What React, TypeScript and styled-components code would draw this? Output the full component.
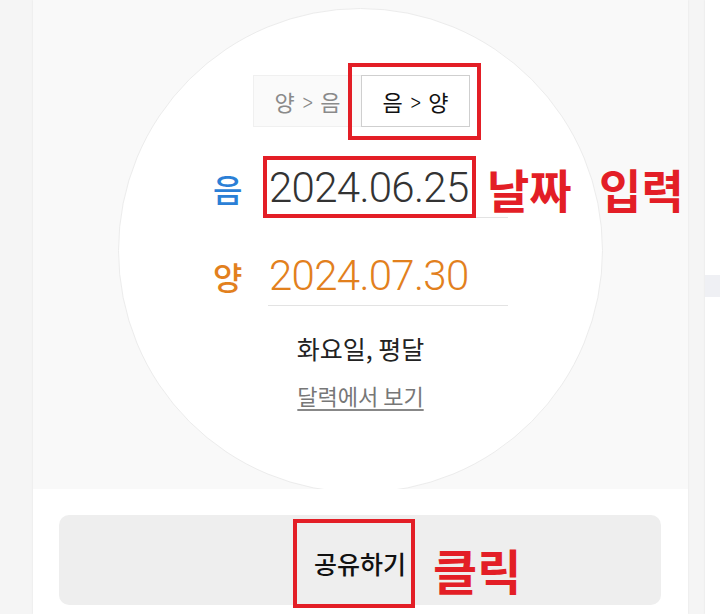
import React from "react";
import styled, { createGlobalStyle } from "styled-components";

const GlobalStyle = createGlobalStyle`
  html, body {
    margin: 0;
    padding: 0;
    background: #f5f5f5;
    font-family: "Noto Sans CJK KR", "Noto Sans", sans-serif;
  }
`;

const Page = styled.div`
  width: 720px;
  height: 614px;
  display: flex;
  overflow: hidden;
  padding-left: 33px;
  box-sizing: border-box;
  gap: 17px;
`;

const Card = styled.div`
  width: 655px;
  flex-shrink: 0;
  display: flex;
  flex-direction: column;
  background: #fff;
  box-shadow: 0 0 2px rgba(0, 0, 0, 0.08);
`;

const SidePanel = styled.div`
  flex: 1;
  background: #fff;
  box-shadow: 0 0 2px rgba(0, 0, 0, 0.08);
  padding-top: 275px;
`;

const SideBand = styled.div`
  height: 22px;
  background: #eff0f4;
`;

const Converter = styled.div`
  height: 489px;
  background: #f9f9f9;
  display: flex;
  justify-content: center;
  overflow: hidden;
`;

const Circle = styled.div`
  width: 485px;
  height: 485px;
  flex-shrink: 0;
  margin-top: 8px;
  border-radius: 50%;
  background: #fff;
  border: 1px solid #ececec;
  box-sizing: border-box;
  display: flex;
  flex-direction: column;
  align-items: center;
  padding-top: 66px;
`;

const Toggle = styled.div`
  display: flex;
  height: 52px;
  background: #fafafa;
  border: 1px solid #f0f0f0;
  box-sizing: border-box;
  margin-left: 2px;
`;

const ToggleButton = styled.div<{ $active?: boolean }>`
  position: relative;
  width: 107px;
  display: flex;
  align-items: center;
  justify-content: center;
  gap: 6px;
  font-size: 22px;
  color: ${(p) => (p.$active ? "#111" : "#8a8a8a")};
  background: ${(p) => (p.$active ? "#fff" : "transparent")};
  border: ${(p) => (p.$active ? "1px solid #cfcfcf" : "none")};
  margin: ${(p) => (p.$active ? "-1px -1px -1px 0" : "0")};
`;

const Chevron = styled.span`
  font-weight: 300;
  font-size: 25px;
  line-height: 25px;
  transform: scaleX(0.75);
`;

const Highlight = styled.div<{ $inset: string }>`
  position: absolute;
  inset: ${(p) => p.$inset};
  border: 4px solid #e31e26;
  pointer-events: none;
`;

const DateRow = styled.div<{ $gap: number }>`
  display: flex;
  align-items: center;
  gap: 25px;
  margin-top: ${(p) => p.$gap}px;
`;

const DateLabel = styled.div<{ $color: string }>`
  width: 30px;
  font-size: 32px;
  font-weight: 500;
  line-height: 38px;
  color: ${(p) => p.$color};
`;

const DateField = styled.div<{ $color: string }>`
  position: relative;
  width: 240px;
  height: 61px;
  box-sizing: border-box;
  border-bottom: 1px solid #e3e3e3;
  padding-left: 1px;
  font-family: Roboto, "Liberation Sans", sans-serif;
  font-weight: 300;
  font-size: 42px;
  letter-spacing: -0.7px;
  line-height: 61px;
  color: ${(p) => p.$color};
`;

const Note = styled.div<{ $left: number; $top: number; $size: number }>`
  position: absolute;
  left: ${(p) => p.$left}px;
  top: ${(p) => p.$top}px;
  font-family: "Noto Sans CJK KR", sans-serif;
  font-weight: 700;
  font-size: ${(p) => p.$size}px;
  line-height: ${(p) => p.$size}px;
  letter-spacing: 0;
  color: #e31e26;
  white-space: nowrap;
  word-spacing: 17px;
`;

const Weekday = styled.div`
  margin-top: 26px;
  font-size: 25px;
  line-height: 32px;
  color: #222;
`;

const CalendarLink = styled.a`
  margin-top: 16px;
  font-size: 22px;
  line-height: 30px;
  color: #777;
  text-decoration: underline;
  text-decoration-color: #888;
  text-underline-offset: 4px;
  cursor: pointer;
`;

const Footer = styled.div`
  flex: 1;
  padding: 26px 27px 0 26px;
  background: #fff;
`;

const ShareButton = styled.button`
  width: 100%;
  height: 90px;
  border: none;
  border-radius: 10px;
  background: #eeeeee;
  display: flex;
  align-items: center;
  justify-content: center;
  font-family: "Noto Sans CJK KR", sans-serif;
  font-size: 25px;
  font-weight: 500;
  color: #111;
  cursor: pointer;
  padding: 6px 0 0 0;
`;

const ShareLabel = styled.span`
  position: relative;
  line-height: 34px;
`;

const App: React.FC = () => {
  return (
    <>
      <GlobalStyle />
      <Page>
        <Card>
          <Converter>
            <Circle>
              <Toggle>
                <ToggleButton>
                  양<Chevron>&gt;</Chevron>음
                </ToggleButton>
                <ToggleButton $active>
                  음<Chevron>&gt;</Chevron>양
                  <Highlight $inset="-13px -12px -14px -14px" />
                </ToggleButton>
              </Toggle>
              <DateRow $gap={30}>
                <DateLabel $color="#2b7fd6">음</DateLabel>
                <DateField $color="#333">
                  2024.06.25
                  <Highlight $inset="-1px 32px -1px -5px" />
                  <Note $left={219} $top={8} $size={46}>
                    날짜 입력
                  </Note>
                </DateField>
              </DateRow>
              <DateRow $gap={27}>
                <DateLabel $color="#e2801d">양</DateLabel>
                <DateField $color="#e2801d">2024.07.30</DateField>
              </DateRow>
              <Weekday>화요일, 평달</Weekday>
              <CalendarLink>달력에서 보기</CalendarLink>
            </Circle>
          </Converter>
          <Footer>
            <ShareButton>
              <ShareLabel>
                공유하기
                <Highlight $inset="-27px -9px -28px -21px" />
                <Note $left={119} $top={-1} $size={48}>
                  클릭
                </Note>
              </ShareLabel>
            </ShareButton>
          </Footer>
        </Card>
        <SidePanel>
          <SideBand />
        </SidePanel>
      </Page>
    </>
  );
};

export default App;
